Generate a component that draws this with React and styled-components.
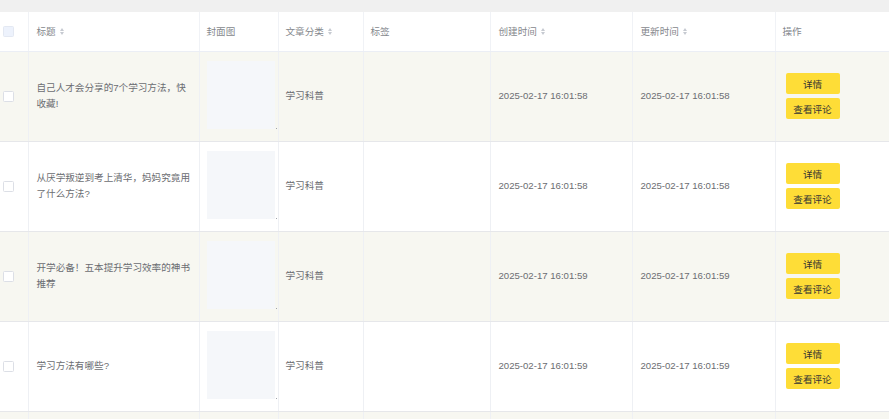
import React from "react";
import styled, { createGlobalStyle } from "styled-components";

const Global = createGlobalStyle`
  html, body { margin: 0; padding: 0; overflow: hidden; background: #fff; }
  body { font-family: "Liberation Sans", "Noto Sans CJK SC", sans-serif; }
`;

const Page = styled.div`
  width: 889px;
  height: 419px;
  overflow: hidden;
  background: #f0f0f0;
  padding-top: 12px;
  box-sizing: border-box;
`;

const Table = styled.table`
  width: 889px;
  table-layout: fixed;
  border-collapse: collapse;
  border-spacing: 0;
  background: #fff;
  font-size: 9.6px;
  color: #6b6d71;
`;

const HeadCell = styled.th`
  height: 39px;
  padding: 0 ${(p) => (p.$pl != null ? p.$pl : 7)}px;
  text-align: left;
  font-weight: normal;
  color: #85888d;
  border-bottom: 1px solid #ebeef5;
  border-right: 1px solid #f0f2f6;
  vertical-align: middle;
  white-space: nowrap;
  box-sizing: border-box;
`;

const HeadInner = styled.span`
  display: inline-flex;
  align-items: center;
  gap: 4px;
`;

const Caret = styled.span`
  display: inline-flex;
  flex-direction: column;
  gap: 1px;
  &::before, &::after {
    content: "";
    width: 0;
    height: 0;
    border-left: 2.5px solid transparent;
    border-right: 2.5px solid transparent;
  }
  &::before { border-bottom: 3px solid #c6cad1; }
  &::after { border-top: 3px solid #c6cad1; }
`;

const Row = styled.tr`
  background: ${(p) => (p.$striped ? "#f7f7f1" : "#fff")};
`;

const Cell = styled.td`
  height: 89px;
  padding: ${(p) => (p.$cover ? "9px 7px 12px" : `0 ${p.$pl != null ? p.$pl : 7}px`)};
  border-bottom: 1px solid #e6e7ea;
  border-right: 1px solid #eef0f4;
  vertical-align: ${(p) => (p.$cover ? "top" : "middle")};
  line-height: 16px;
  word-break: break-all;
  box-sizing: border-box;
`;

const Check = styled.span`
  display: block;
  width: 9px;
  height: 9px;
  border: 1px solid ${(p) => (p.$head ? "#e3e8f2" : "#dcdfe6")};
  background: ${(p) => (p.$head ? "#edf2fc" : "#fff")};
  border-radius: 1.5px;
`;

const Cover = styled.div`
  position: relative;
  width: 68px;
  height: 68px;
  background: #f5f7fa;
  &::after {
    content: "";
    position: absolute;
    right: -2px;
    bottom: 0;
    width: 1px;
    height: 1px;
    background: #a0a4ab;
  }
`;

const Actions = styled.div`
  display: flex;
  flex-direction: column;
  align-items: flex-start;
  gap: 4px;
`;

const Btn = styled.button`
  width: 54px;
  height: 21px;
  padding: 0;
  border: none;
  border-radius: 2px;
  background: #fedd37;
  color: #333;
  font-family: inherit;
  font-size: 9.6px;
  cursor: pointer;
`;

const cols = [28, 171, 79, 85, 127, 142, 143, 114];

const rows = [
  { title: "自己人才会分享的7个学习方法，快收藏!", c: "2025-02-17 16:01:58" },
  { title: "从厌学叛逆到考上清华，妈妈究竟用了什么方法?", c: "2025-02-17 16:01:58" },
  { title: "开学必备！五本提升学习效率的神书推荐", c: "2025-02-17 16:01:59" },
  { title: "学习方法有哪些?", c: "2025-02-17 16:01:59" },
];

export default function App() {
  return (
    <>
      <Global />
      <Page>
        <Table>
          <colgroup>
            {cols.map((w, i) => (
              <col key={i} style={{ width: w }} />
            ))}
          </colgroup>
          <thead>
            <tr>
              <HeadCell $pl={3}><Check $head /></HeadCell>
              <HeadCell $pl={8}><HeadInner>标题<Caret /></HeadInner></HeadCell>
              <HeadCell>封面图</HeadCell>
              <HeadCell><HeadInner>文章分类<Caret /></HeadInner></HeadCell>
              <HeadCell>标签</HeadCell>
              <HeadCell $pl={8}><HeadInner>创建时间<Caret /></HeadInner></HeadCell>
              <HeadCell $pl={8}><HeadInner>更新时间<Caret /></HeadInner></HeadCell>
              <HeadCell>操作</HeadCell>
            </tr>
          </thead>
          <tbody>
            {rows.map((r, i) => (
              <Row key={i} $striped={i % 2 === 0}>
                <Cell $pl={3}><Check /></Cell>
                <Cell $pl={8}>{r.title}</Cell>
                <Cell $cover><Cover /></Cell>
                <Cell>学习科普</Cell>
                <Cell></Cell>
                <Cell $pl={8}>{r.c}</Cell>
                <Cell $pl={8}>{r.c}</Cell>
                <Cell $pl={10}>
                  <Actions>
                    <Btn>详情</Btn>
                    <Btn>查看评论</Btn>
                  </Actions>
                </Cell>
              </Row>
            ))}
            <Row $striped>
              {cols.map((_, i) => (
                <Cell key={i} />
              ))}
            </Row>
          </tbody>
        </Table>
      </Page>
    </>
  );
}
